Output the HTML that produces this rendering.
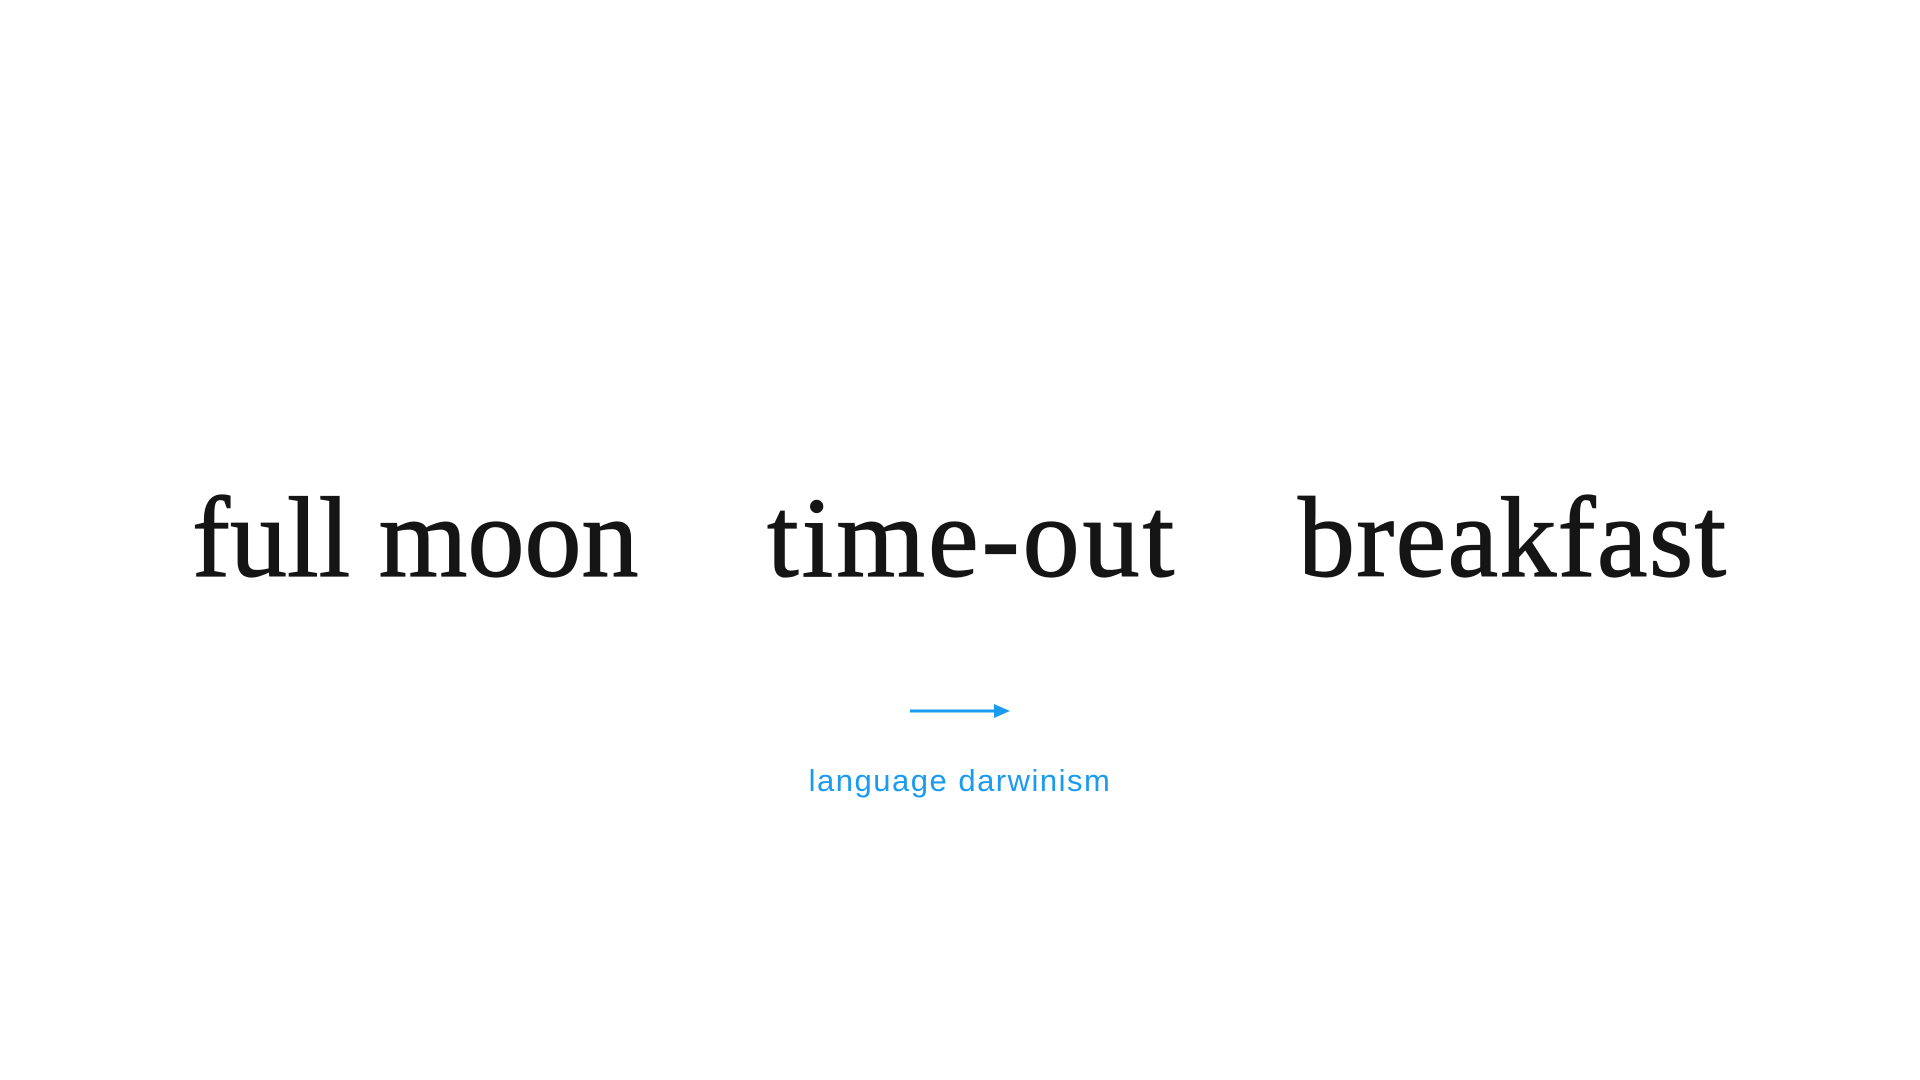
<!DOCTYPE html>
<html><head><meta charset="utf-8"><style>
html,body{margin:0;padding:0;background:#fff;width:1920px;height:1080px;overflow:hidden}
.w{position:absolute;top:0;font-family:"Liberation Serif",serif;font-size:114px;color:#151515;line-height:1;white-space:nowrap;-webkit-text-stroke:1.2px #151515}
.cap{position:absolute;left:0;width:1920px;text-align:center;top:763px;font-family:"Liberation Sans",sans-serif;font-size:31px;color:#1a9bf0;letter-spacing:1.5px}
</style></head><body>
<div class="w" style="left:192px;top:481px">full moon</div>
<div class="w" style="left:767px;top:481px;letter-spacing:3px">time-out</div>
<div class="w" style="left:1298px;top:481px;letter-spacing:1.3px">breakfast</div>
<svg style="position:absolute;left:0;top:0" width="1920" height="1080">
<line x1="910" y1="711" x2="996" y2="711" stroke="#1a9bf0" stroke-width="3"/>
<polygon points="994,704 1010,711 994,718" fill="#1a9bf0"/>
</svg>
<div class="cap">language darwinism</div>
</body></html>
